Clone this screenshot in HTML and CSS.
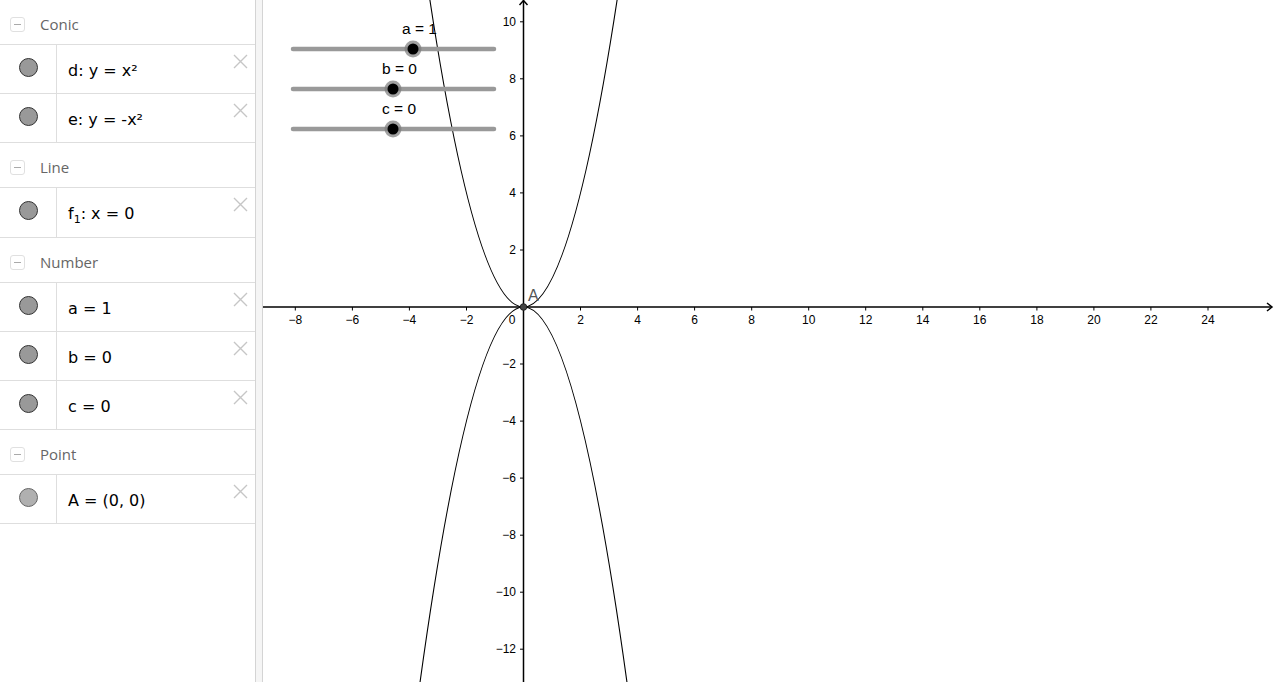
FILE: index.html
```html
<!DOCTYPE html>
<html>
<head>
<meta charset="utf-8">
<title>Graph</title>
<link rel="stylesheet" href="styles.css">
</head>
<body>
<div class="app">
  <aside class="panel">
    <div class="group-head"><span class="toggle"><span class="toggle-bar"></span></span><span class="group-name">Conic</span></div>
    <div class="row">
      <div class="marble-cell"><span class="marble"></span></div>
      <div class="item"><span class="item-text">d: y = x²</span><svg class="close" viewBox="0 0 15 15"><path d="M1 1L14 14M14 1L1 14"/></svg></div>
    </div>
    <div class="row">
      <div class="marble-cell"><span class="marble"></span></div>
      <div class="item"><span class="item-text">e: y = -x²</span><svg class="close" viewBox="0 0 15 15"><path d="M1 1L14 14M14 1L1 14"/></svg></div>
    </div>
    <div class="group-head"><span class="toggle"><span class="toggle-bar"></span></span><span class="group-name">Line</span></div>
    <div class="row row-tall">
      <div class="marble-cell"><span class="marble"></span></div>
      <div class="item"><span class="item-text">f<sub>1</sub>: x = 0</span><svg class="close" viewBox="0 0 15 15"><path d="M1 1L14 14M14 1L1 14"/></svg></div>
    </div>
    <div class="group-head"><span class="toggle"><span class="toggle-bar"></span></span><span class="group-name">Number</span></div>
    <div class="row">
      <div class="marble-cell"><span class="marble"></span></div>
      <div class="item"><span class="item-text">a = 1</span><svg class="close" viewBox="0 0 15 15"><path d="M1 1L14 14M14 1L1 14"/></svg></div>
    </div>
    <div class="row">
      <div class="marble-cell"><span class="marble"></span></div>
      <div class="item"><span class="item-text">b = 0</span><svg class="close" viewBox="0 0 15 15"><path d="M1 1L14 14M14 1L1 14"/></svg></div>
    </div>
    <div class="row">
      <div class="marble-cell"><span class="marble"></span></div>
      <div class="item"><span class="item-text">c = 0</span><svg class="close" viewBox="0 0 15 15"><path d="M1 1L14 14M14 1L1 14"/></svg></div>
    </div>
    <div class="group-head"><span class="toggle"><span class="toggle-bar"></span></span><span class="group-name">Point</span></div>
    <div class="row">
      <div class="marble-cell"><span class="marble marble-light"></span></div>
      <div class="item"><span class="item-text">A = (0, 0)</span><svg class="close" viewBox="0 0 15 15"><path d="M1 1L14 14M14 1L1 14"/></svg></div>
    </div>
  </aside>
  <div class="divider"></div>
  <main class="graph">
    <svg class="canvas" width="1012" height="682" viewBox="0 0 1012 682">
      <g class="axis">
        <line x1="0" y1="307" x2="1009" y2="307"/>
        <polyline points="1004,303 1009,307 1004,311" fill="none"/>
        <line x1="260.5" y1="682" x2="260.5" y2="0.5"/>
        <polyline points="256.5,5 260.5,0.5 264.5,5" fill="none"/>
      </g>
      <g class="ticks">
        <path d="M32.3 307v3.5M89.4 307v3.5M146.4 307v3.5M203.5 307v3.5M317.5 307v3.5M374.6 307v3.5M431.6 307v3.5M488.7 307v3.5M545.7 307v3.5M602.7 307v3.5M659.8 307v3.5M716.8 307v3.5M773.9 307v3.5M830.9 307v3.5M887.9 307v3.5M945 307v3.5"/>
        <path d="M260.5 21.8h-3.5M260.5 78.8h-3.5M260.5 135.9h-3.5M260.5 192.9h-3.5M260.5 250h-3.5M260.5 364h-3.5M260.5 421.1h-3.5M260.5 478.1h-3.5M260.5 535.2h-3.5M260.5 592.2h-3.5M260.5 649.2h-3.5"/>
      </g>
      <g class="xlabels">
        <text x="32.3" y="323.5">−8</text>
        <text x="89.4" y="323.5">−6</text>
        <text x="146.4" y="323.5">−4</text>
        <text x="203.5" y="323.5">−2</text>
        <text x="317.5" y="323.5">2</text>
        <text x="374.6" y="323.5">4</text>
        <text x="431.6" y="323.5">6</text>
        <text x="488.7" y="323.5">8</text>
        <text x="545.7" y="323.5">10</text>
        <text x="602.7" y="323.5">12</text>
        <text x="659.8" y="323.5">14</text>
        <text x="716.8" y="323.5">16</text>
        <text x="773.9" y="323.5">18</text>
        <text x="830.9" y="323.5">20</text>
        <text x="887.9" y="323.5">22</text>
        <text x="945" y="323.5">24</text>
        <text x="249" y="323.5">0</text>
      </g>
      <g class="ylabels">
        <text x="253" y="26">10</text>
        <text x="253" y="83">8</text>
        <text x="253" y="140.1">6</text>
        <text x="253" y="197.1">4</text>
        <text x="253" y="254.2">2</text>
        <text x="253" y="368.2">−2</text>
        <text x="253" y="425.3">−4</text>
        <text x="253" y="482.3">−6</text>
        <text x="253" y="539.4">−8</text>
        <text x="253" y="596.4">−10</text>
        <text x="253" y="653.4">−12</text>
      </g>
      <path class="curve" d="M152.1,-104.8 Q260.5,718.8 368.9,-104.8"/>
      <path class="curve" d="M146.4,763.3 Q260.5,-149.3 374.6,763.3"/>
      <circle class="pt" cx="260.5" cy="307" r="3.3"/>
      <text class="pt-label" x="265" y="300.5">A</text>
      <g class="slider">
        <text class="slider-label" x="139" y="33.5">a = 1</text>
        <line class="track" x1="30" y1="49" x2="231" y2="49"/>
        <circle class="halo" cx="150" cy="49" r="8.5"/>
        <circle class="knob" cx="150" cy="49" r="5.5"/>
      </g>
      <g class="slider">
        <text class="slider-label" x="119" y="73.5">b = 0</text>
        <line class="track" x1="30" y1="89" x2="231" y2="89"/>
        <circle class="halo" cx="130" cy="89" r="8.5"/>
        <circle class="knob" cx="130" cy="89" r="5.5"/>
      </g>
      <g class="slider">
        <text class="slider-label" x="119" y="113.5">c = 0</text>
        <line class="track" x1="30" y1="129" x2="231" y2="129"/>
        <circle class="halo" cx="130" cy="129" r="8.5"/>
        <circle class="knob" cx="130" cy="129" r="5.5"/>
      </g>
    </svg>
  </main>
</div>
</body>
</html>
```
FILE: styles.css
```css
html, body {
  margin: 0;
  padding: 0;
  background: #fff;
}
body {
  width: 1275px;
  height: 682px;
  overflow: hidden;
  font-family: "DejaVu Sans", sans-serif;
}
.app {
  display: flex;
  height: 682px;
}
.panel {
  width: 255px;
  flex: none;
  background: #fff;
  display: flex;
  flex-direction: column;
}
.divider {
  width: 6px;
  flex: none;
  background: #f5f5f5;
  border-left: 1px solid #d4d4d4;
  border-right: 1px solid #d4d4d4;
}
.graph {
  flex: 1;
  overflow: hidden;
}
.canvas {
  display: block;
}

/* group headers */
.group-head {
  height: 45px;
  box-sizing: border-box;
  padding: 4px 0 0 10px;
  display: flex;
  align-items: center;
  border-bottom: 1px solid #dedede;
  flex: none;
}
.toggle {
  width: 15px;
  height: 15px;
  box-sizing: border-box;
  border: 1px solid #e0e0e0;
  border-radius: 3px;
  display: flex;
  align-items: center;
  justify-content: center;
}
.toggle-bar {
  width: 7px;
  height: 1px;
  background: #aaa;
}
.group-name {
  margin-left: 15px;
  font-family: "Open Sans", sans-serif;
  font-size: 15px;
  color: #666;
}

/* rows */
.row {
  height: 49px;
  box-sizing: border-box;
  border-bottom: 1px solid #dedede;
  display: flex;
  flex: none;
}
.row-tall {
  height: 50px;
}
.marble-cell {
  width: 57px;
  flex: none;
  border-right: 1px solid #dedede;
  display: flex;
  justify-content: center;
  align-items: flex-start;
  padding-top: 13px;
  box-sizing: border-box;
}
.marble {
  width: 19px;
  height: 19px;
  box-sizing: border-box;
  border-radius: 50%;
  background: #999;
  border: 1px solid #333;
}
.marble-light {
  background: #b0b0b0;
  border-color: #666;
}
.item {
  flex: 1;
  display: flex;
  align-items: flex-start;
  padding-left: 11px;
}
.item-text {
  flex: 1;
  padding-top: 16px;
  font-size: 16px;
  line-height: 20px;
  color: #000;
  white-space: nowrap;
}
.item-text sub {
  font-size: 11px;
  line-height: 0;
  vertical-align: -4px;
}
.close {
  width: 15px;
  height: 15px;
  flex: none;
  margin: 9px 7px 0 0;
  fill: none;
  stroke: #c6c6c6;
  stroke-width: 1.4;
}

/* graphics */
.axis line, .axis polyline {
  stroke: #000;
  stroke-width: 1.5;
}
.ticks path {
  stroke: #000;
  stroke-width: 1;
  fill: none;
}
.xlabels text, .ylabels text {
  font-family: "Liberation Sans", Arial, sans-serif;
  font-size: 12px;
  fill: #000;
}
.xlabels text {
  text-anchor: middle;
}
.ylabels text {
  text-anchor: end;
}
.curve {
  fill: none;
  stroke: #000;
  stroke-width: 1.1;
}
.pt {
  fill: #444;
  stroke: #222;
  stroke-width: 1;
}
.pt-label {
  font-family: "Liberation Sans", Arial, sans-serif;
  font-size: 16px;
  fill: #555;
}
.slider-label {
  font-family: "Liberation Sans", Arial, sans-serif;
  font-size: 15.5px;
  fill: #000;
}
.track {
  stroke: #999;
  stroke-width: 4.5;
  stroke-linecap: round;
}
.halo {
  fill: #7a7a7a;
  opacity: 0.7;
}
.knob {
  fill: #000;
}
```
